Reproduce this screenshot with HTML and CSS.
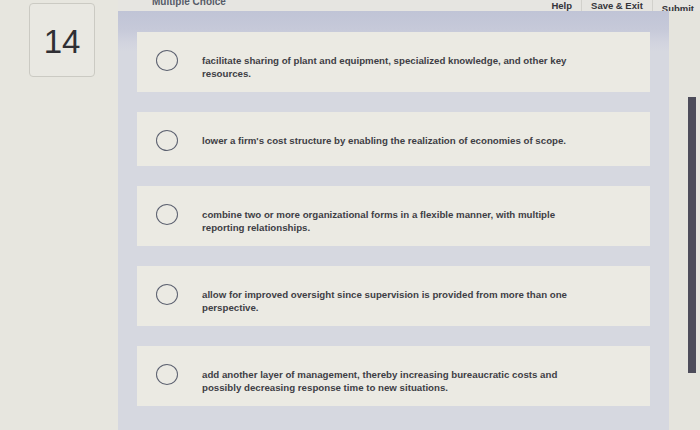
FILE: index.html
```html
<!DOCTYPE html>
<html>
<head>
<meta charset="utf-8">
<link rel="stylesheet" href="styles.css">
</head>
<body>
<div class="page">
  <aside class="left-col">
    <div class="qnum">14</div>
  </aside>
  <main class="main">
    <header class="topbar">
      <div class="qtype">Multiple Choice</div>
      <nav class="nav">
        <span class="nav-item">Help</span>
        <span class="nav-item sep">Save &amp; Exit</span>
        <span class="nav-item sep last">Submit</span>
      </nav>
    </header>
    <div class="content-row">
      <section class="panel">
        <div class="option"><span class="radio"></span><p class="opt-text">facilitate sharing of plant and equipment, specialized knowledge, and other key resources.</p></div>
        <div class="option"><span class="radio"></span><p class="opt-text">lower a firm's cost structure by enabling the realization of economies of scope.</p></div>
        <div class="option"><span class="radio"></span><p class="opt-text">combine two or more organizational forms in a flexible manner, with multiple reporting relationships.</p></div>
        <div class="option"><span class="radio"></span><p class="opt-text">allow for improved oversight since supervision is provided from more than one perspective.</p></div>
        <div class="option"><span class="radio"></span><p class="opt-text">add another layer of management, thereby increasing bureaucratic costs and possibly decreasing response time to new situations.</p></div>
      </section>
      <div class="rail"><div class="scrollbar"></div></div>
    </div>
  </main>
</div>
</body>
</html>
```
FILE: styles.css
```css
html, body {
  margin: 0;
  padding: 0;
}
body {
  width: 700px;
  height: 430px;
  overflow: hidden;
  background: #e7e6df;
  font-family: "Liberation Sans", Arial, sans-serif;
  color: #3d3d44;
}
.page {
  display: flex;
  height: 430px;
}
.left-col {
  width: 118px;
  flex: none;
  padding-top: 3px;
  box-sizing: border-box;
}
.qnum {
  margin-left: 29px;
  width: 66px;
  height: 74px;
  box-sizing: border-box;
  border: 1px solid #cbcac3;
  border-radius: 4px;
  background: #e9e8e2;
  display: flex;
  align-items: center;
  justify-content: center;
  font-size: 33px;
  color: #2f2f34;
  padding-top: 4px;
}
.main {
  flex: 1;
  display: flex;
  flex-direction: column;
}
.topbar {
  height: 11px;
  display: flex;
  justify-content: space-between;
  align-items: flex-start;
  background: #e6e5e1;
}
.qtype {
  margin-left: 34px;
  margin-top: -4px;
  font-size: 10px;
  line-height: 12px;
  font-weight: 700;
  color: #565b68;
}
.nav {
  display: flex;
  margin-right: 6px;
}
.nav-item {
  font-size: 9.5px;
  font-weight: 700;
  line-height: 12px;
  height: 16px;
  padding: 0 9px;
  color: #34343a;
}
.nav-item.sep {
  border-left: 1px solid #d2d1cc;
}
.nav-item.last {
  padding-right: 0;
  padding-top: 3px;
  height: 13px;
}
.content-row {
  flex: 1;
  display: flex;
}
.panel {
  width: 551px;
  flex: none;
  box-sizing: border-box;
  padding: 21px 19px 0 19px;
  background: #d6d8e0 linear-gradient(#c0c4d6 0px, #c6c9d9 18px, #d2d4df 32px, #d6d8e0 40px) no-repeat;
  background-size: 100% 40px;
  display: flex;
  flex-direction: column;
  gap: 20px;
}
.option {
  display: flex;
  gap: 24px;
  min-height: 54px;
  box-sizing: border-box;
  padding: 18px 20px 12px 19px;
  background: #ebeae3;
}
.radio {
  flex: none;
  width: 22px;
  height: 21px;
  box-sizing: border-box;
  border: 1.5px solid #5c6170;
  border-radius: 50%;
}
.opt-text {
  margin: 4px 0 0 0;
  max-width: 382px;
  font-size: 9.7px;
  line-height: 13px;
  font-weight: 700;
  color: #3e3e45;
}
.rail {
  flex: 1;
  background: #e5e4dd;
}
.scrollbar {
  margin-left: 19px;
  margin-top: 86px;
  width: 8px;
  height: 276px;
  background: #4d4c5a;
}
```
